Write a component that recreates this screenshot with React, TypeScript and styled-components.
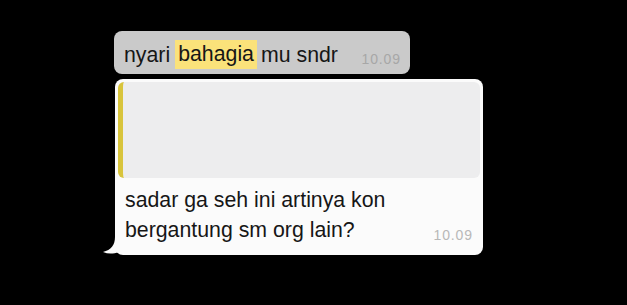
import React from "react";
import styled, { createGlobalStyle } from "styled-components";

const Global = createGlobalStyle`
  html, body { margin: 0; padding: 0; background: #000; }
  body { width: 627px; height: 305px; overflow: hidden; font-family: "Liberation Sans", Arial, sans-serif; }
`;

const Page = styled.div`
  width: 627px;
  height: 305px;
  background: #000;
  display: flex;
  flex-direction: column;
  align-items: flex-start;
  padding: 31px 0 0 114px;
  box-sizing: border-box;
  gap: 5px;
`;

const GrayBubble = styled.div`
  width: 296px;
  height: 43px;
  box-sizing: border-box;
  background: #cacaca;
  border-radius: 8px;
  display: flex;
  align-items: flex-end;
  justify-content: space-between;
  padding: 0 9px 9px 10px;
`;

const MsgText = styled.span`
  font-size: 21.3px;
  line-height: 30px;
  color: #161616;
  white-space: nowrap;
`;

const TopText = styled(MsgText)`
  display: flex;
  align-items: center;
  height: 29px;
  margin-bottom: -4px;
`;

const Highlight = styled.span`
  display: inline-block;
  background: #fbe27a;
  height: 29px;
  line-height: 29px;
  padding: 0 3px;
  margin: 0 4px 0 5px;
`;

const Time = styled.span<{ $tone: string; $lift: number }>`
  font-size: 14px;
  letter-spacing: 0.9px;
  color: ${(p) => p.$tone};
  line-height: 14px;
  margin-bottom: ${(p) => p.$lift}px;
`;

const WhiteBubble = styled.div`
  position: relative;
  margin-left: 1px;
  width: 368px;
  height: 176px;
  box-sizing: border-box;
  background: #fbfbfb;
  border-radius: 8px;
  padding: 3px;
  display: flex;
  flex-direction: column;
`;

const Quote = styled.div`
  height: 96px;
  background: #ededee;
  border-radius: 6px;
  border-left: 5px solid #d8c43c;
`;

const Body = styled.div`
  display: flex;
  align-items: flex-end;
  justify-content: space-between;
  padding: 7px 7px 0 7px;
`;

const Lines = styled.div`
  display: flex;
  flex-direction: column;
`;

const Tail = styled.svg`
  position: absolute;
  left: -12px;
  bottom: 0;
`;

export default function App() {
  return (
    <>
      <Global />
      <Page>
        <GrayBubble>
          <TopText>
            nyari<Highlight>bahagia</Highlight>mu sndr
          </TopText>
          <Time $tone="#a7a7a7" $lift={-1}>10.09</Time>
        </GrayBubble>
        <WhiteBubble>
          <Tail width="16" height="18" viewBox="0 0 16 18">
            <path d="M16 0 L12 0 C12 8 8 13 0 15 C5 17 10 17 16 15 Z" fill="#fbfbfb" />
          </Tail>
          <Quote />
          <Body>
            <Lines>
              <MsgText>sadar ga seh ini artinya kon</MsgText>
              <MsgText>bergantung sm org lain?</MsgText>
            </Lines>
            <Time $tone="#b8b8b8" $lift={3}>10.09</Time>
          </Body>
        </WhiteBubble>
      </Page>
    </>
  );
}
